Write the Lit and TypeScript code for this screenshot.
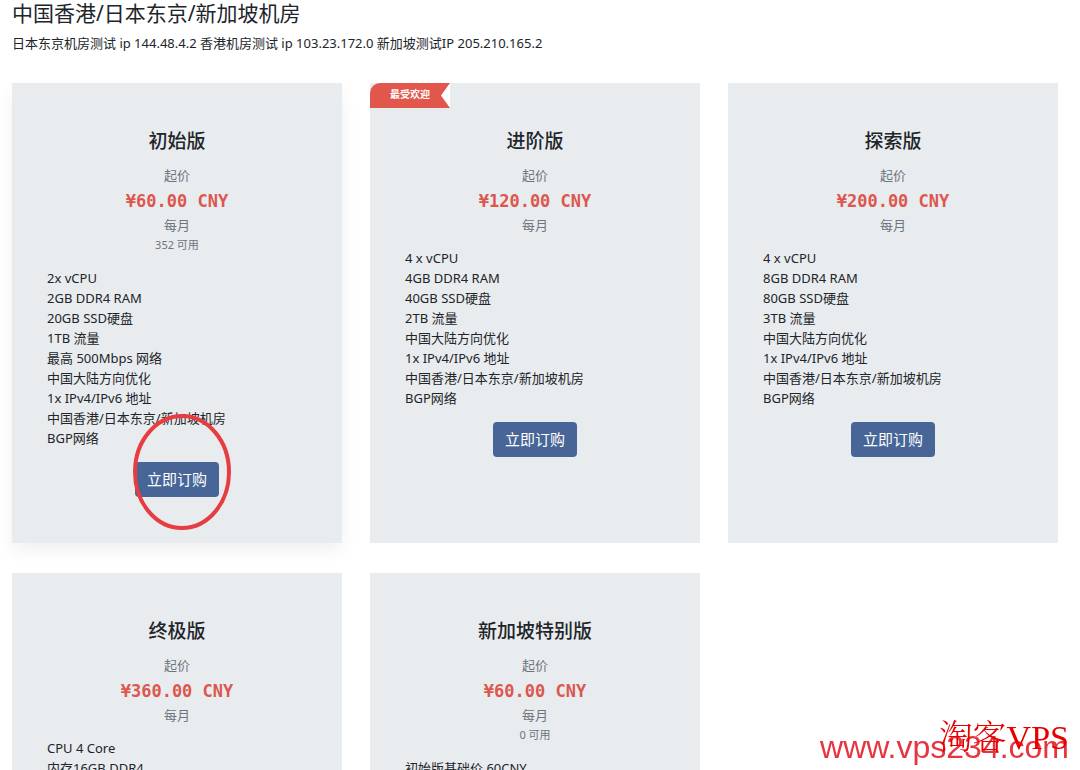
import { LitElement, html, css, nothing } from "lit";
import { customElement, property } from "lit/decorators.js";

interface Plan {
  name: string;
  price: string;
  stock?: number;
  badge?: string;
  raised?: boolean;
  marked?: boolean;
  features: string[];
}

const plans: Plan[] = [
  {
    name: "初始版",
    price: "¥60.00 CNY",
    stock: 352,
    raised: true,
    marked: true,
    features: [
      "2x vCPU",
      "2GB DDR4 RAM",
      "20GB SSD硬盘",
      "1TB 流量",
      "最高 500Mbps 网络",
      "中国大陆方向优化",
      "1x IPv4/IPv6 地址",
      "中国香港/日本东京/新加坡机房",
      "BGP网络",
    ],
  },
  {
    name: "进阶版",
    price: "¥120.00 CNY",
    badge: "最受欢迎",
    features: [
      "4 x vCPU",
      "4GB DDR4 RAM",
      "40GB SSD硬盘",
      "2TB 流量",
      "中国大陆方向优化",
      "1x IPv4/IPv6 地址",
      "中国香港/日本东京/新加坡机房",
      "BGP网络",
    ],
  },
  {
    name: "探索版",
    price: "¥200.00 CNY",
    features: [
      "4 x vCPU",
      "8GB DDR4 RAM",
      "80GB SSD硬盘",
      "3TB 流量",
      "中国大陆方向优化",
      "1x IPv4/IPv6 地址",
      "中国香港/日本东京/新加坡机房",
      "BGP网络",
    ],
  },
  {
    name: "终极版",
    price: "¥360.00 CNY",
    features: ["CPU 4 Core", "内存16GB DDR4"],
  },
  {
    name: "新加坡特别版",
    price: "¥60.00 CNY",
    stock: 0,
    features: ["初始版基础价 60CNY"],
  },
];

@customElement("plan-card")
class PlanCard extends LitElement {
  @property({ attribute: false }) plan!: Plan;

  static styles = css`
    :host {
      display: flex;
    }
    .card {
      position: relative;
      flex: 1;
      display: flex;
      flex-direction: column;
      align-items: center;
      padding: 43px 35px 46px;
      box-sizing: border-box;
      background: #e9ecef;
    }
    .raised {
      box-shadow: 0 8px 16px rgba(0, 0, 0, 0.06);
    }
    .badge {
      position: absolute;
      top: 0;
      left: 0;
      padding: 0 20px 3px;
      border-top-left-radius: 10px;
      background: #e2574c;
      color: #fff;
      font-size: 10px;
      font-weight: 700;
      line-height: 22px;
    }
    .notch {
      position: absolute;
      top: 0;
      right: 0;
      width: 9px;
      height: 100%;
      fill: #fff;
    }
    .name {
      margin: 0 0 9px;
      font-size: 19px;
      font-weight: 500;
      line-height: 30px;
    }
    .muted {
      color: #6c757d;
      line-height: 20px;
    }
    .price {
      padding-top: 2px;
      color: #dc574e;
      font-family: "DejaVu Sans Mono", monospace;
      font-size: 17px;
      font-weight: 700;
      line-height: 28px;
    }
    .stock {
      font-size: 11px;
    }
    .features {
      align-self: stretch;
      margin: 13px 0 14px;
      padding: 0;
      list-style: none;
      line-height: 20px;
    }
    .action {
      position: relative;
    }
    .order {
      display: block;
      padding: 0 12px;
      border: 0;
      border-radius: 4px;
      background: #476697;
      color: #fff;
      font: inherit;
      font-size: 15px;
      font-weight: 400;
      line-height: 35px;
      cursor: pointer;
    }
    .ring {
      position: absolute;
      left: -3px;
      top: -49px;
      width: 100px;
      height: 118px;
      fill: none;
      stroke: #e73c40;
      stroke-width: 4;
      pointer-events: none;
    }
  `;

  render() {
    const p = this.plan;
    return html`
      <article class="card ${p.raised ? "raised" : ""}">
        ${p.badge
          ? html`<div class="badge">
              ${p.badge}<svg class="notch" viewBox="0 0 9 25" preserveAspectRatio="none" aria-hidden="true">
                <path d="M9 0L0 12.5L9 25Z" />
              </svg>
            </div>`
          : nothing}
        <h3 class="name">${p.name}</h3>
        <div class="muted">起价</div>
        <div class="price">${p.price}</div>
        <div class="muted">每月</div>
        ${p.stock === undefined ? nothing : html`<div class="muted stock">${p.stock} 可用</div>`}
        <ul class="features">
          ${p.features.map((f) => html`<li>${f}</li>`)}
        </ul>
        <div class="action">
          <button class="order" type="button">立即订购</button>
          ${p.marked
            ? html`<svg class="ring" viewBox="0 0 100 118" aria-hidden="true">
                <ellipse cx="50" cy="59" rx="47" ry="56" />
              </svg>`
            : nothing}
        </div>
      </article>
    `;
  }
}

@customElement("app-root")
class AppRoot extends LitElement {
  static styles = css`
    :host {
      display: block;
      min-height: 100vh;
      padding: 0 22px 30px 12px;
      box-sizing: border-box;
      background: #fff;
      color: #212529;
      font-family: "Noto Sans", "Noto Sans CJK SC", sans-serif;
      font-size: 13px;
      line-height: 20px;
    }
    .title {
      margin: 0;
      font-size: 21px;
      font-weight: 400;
      line-height: 26px;
    }
    .tagline {
      margin: 7px 0 30px;
    }
    .plans {
      display: grid;
      grid-template-columns: repeat(3, minmax(0, 1fr));
      gap: 30px 28px;
    }
    .site,
    .brand {
      position: fixed;
      right: 11px;
      white-space: nowrap;
      pointer-events: none;
    }
    .site {
      bottom: 4px;
      color: #e63540;
      font-family: "Liberation Sans", sans-serif;
      font-size: 32px;
      line-height: 38px;
    }
    .brand {
      bottom: 12px;
      color: #e60000;
      font-family: "Liberation Serif", "Noto Serif CJK SC", "Noto Sans CJK SC", serif;
      font-size: 34px;
      font-weight: 300;
      line-height: 40px;
    }
  `;

  render() {
    return html`
      <main>
        <h2 class="title">中国香港/日本东京/新加坡机房</h2>
        <p class="tagline">日本东京机房测试 ip 144.48.4.2 香港机房测试 ip 103.23.172.0 新加坡测试IP 205.210.165.2</p>
        <section class="plans">
          ${plans.map((p) => html`<plan-card .plan=${p}></plan-card>`)}
        </section>
      </main>
      <div class="site">www.vps234.com</div>
      <div class="brand">淘客VPS</div>
    `;
  }
}
